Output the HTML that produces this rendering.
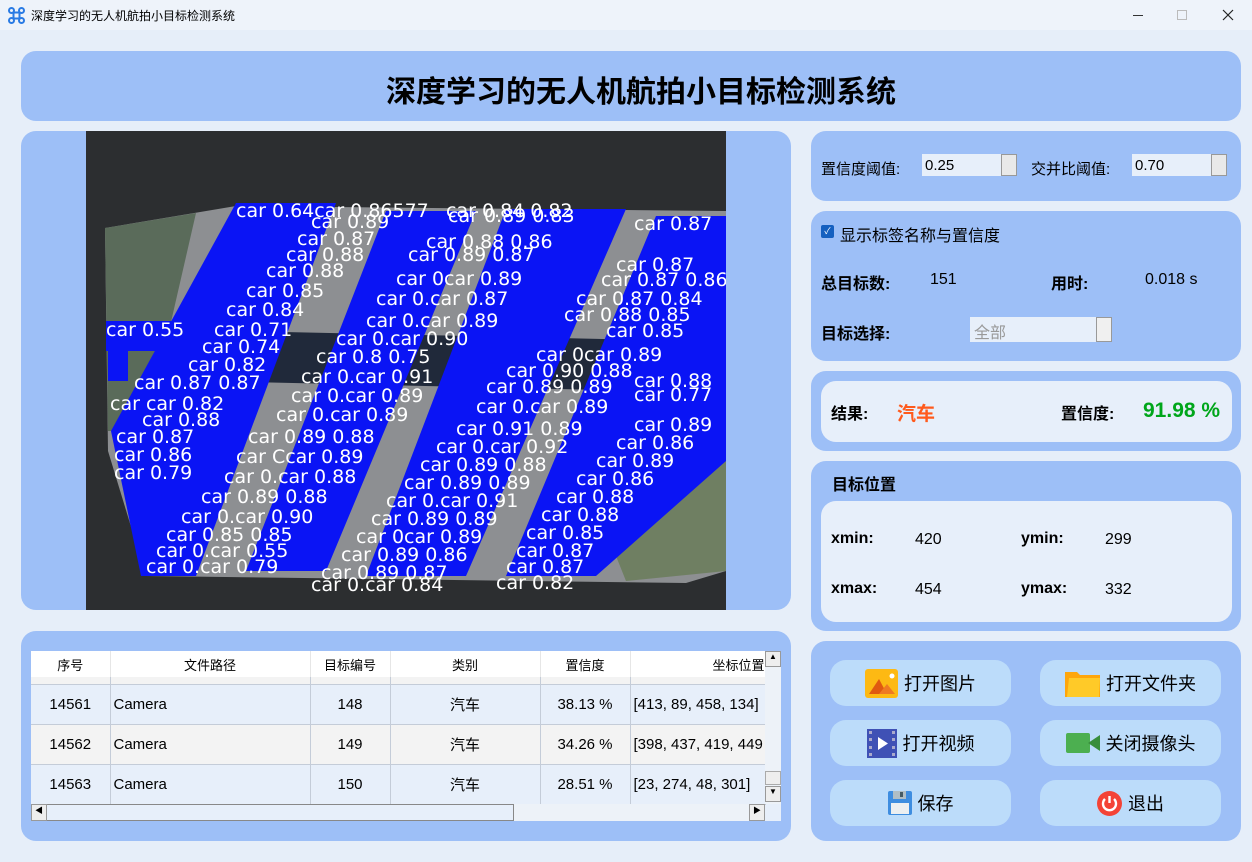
<!DOCTYPE html><html><head><meta charset="utf-8"><style>
*{margin:0;padding:0;box-sizing:border-box}
body{width:1252px;height:862px;background:#e6eef9;font-family:"Liberation Sans","Noto Sans CJK SC",sans-serif;position:relative;overflow:hidden;color:#000}
.a{position:absolute}
.p{position:absolute;background:#9dbff7;border-radius:15px}
.w{position:absolute;background:#e7effa;border-radius:15px}
.t{position:absolute;font-size:16px;white-space:nowrap}
.b{font-weight:bold}
.btn{position:absolute;width:181px;height:46px;background:#bcdcfa;border-radius:16px;font-size:18px;display:flex;align-items:center;justify-content:center;gap:6px}
table{border-collapse:collapse;font-size:15px}
td{border-right:1px solid #c4ccd8;border-bottom:1px solid #c4ccd8;height:40px;text-align:center;white-space:nowrap;overflow:hidden}
.spin{position:absolute;width:95px;height:22px;background:#e7effa;font-size:15px;padding:3px 0 0 3px}
.spin i{position:absolute;right:0;top:0;width:16px;height:22px;background:#e9e9e9;border:1px solid #999}
</style></head><body>
<div class="a" style="left:0;top:0;width:1252px;height:30px;background:#eef3fa"></div>
<svg class="a" style="left:8px;top:7px" width="17" height="17" viewBox="0 0 17 17"><g fill="none" stroke="#2a7be4" stroke-width="2"><circle cx="3.5" cy="3.5" r="2.5"/><circle cx="13.5" cy="3.5" r="2.5"/><circle cx="3.5" cy="13.5" r="2.5"/><circle cx="13.5" cy="13.5" r="2.5"/><rect x="5.5" y="5.5" width="6" height="6"/></g></svg>
<div class="t" style="left:31px;top:7px;font-size:12px">深度学习的无人机航拍小目标检测系统</div>
<div class="a" style="left:1133px;top:15px;width:10px;height:1px;background:#333"></div>
<div class="a" style="left:1177px;top:10px;width:10px;height:10px;border:1px solid #bbb"></div>
<svg class="a" style="left:1222px;top:9px" width="12" height="12"><path d="M1 1L11 11M11 1L1 11" stroke="#222" stroke-width="1.2"/></svg>

<div class="p" style="left:21px;top:51px;width:1220px;height:70px"></div>
<div class="t b" style="left:0;width:1282px;text-align:center;top:67px;font-size:30px">深度学习的无人机航拍小目标检测系统</div>

<div class="p" style="left:21px;top:131px;width:770px;height:479px"></div>
<svg class="a" style="left:86px;top:131px" width="640" height="479" viewBox="0 0 640 479">
<rect width="640" height="479" fill="#2c2e30"/>
<polygon points="19,97 150,75 640,80 640,440 600,452 60,445 22,320" fill="#8d8f92"/>
<polygon points="19,97 110,82 60,300 22,300" fill="#5a6b5a"/>
<polygon points="520,400 640,260 640,440 540,450" fill="#6f7f62"/>
<polygon points="150,200 610,210 560,260 120,250" fill="#20293a"/>
<g fill="#0a14f5">
<polygon points="150,72 250,72 110,445 55,445 25,300"/>
<polygon points="300,80 390,80 240,440 160,440"/>
<polygon points="420,78 540,78 380,445 280,445"/>
<polygon points="570,85 640,85 640,330 510,445 420,445"/>
<rect x="20" y="190" width="90" height="30"/>
<rect x="22" y="220" width="20" height="30"/>
</g>
<g fill="#fff" font-family="DejaVu Sans,sans-serif" font-size="19">
<text x="150" y="86">car 0.64car 0.86577</text><text x="360" y="86">car 0.84 0.82</text>
<text x="225" y="97">car 0.89</text><text x="362" y="91">car 0.89  0.83</text><text x="548" y="99">car 0.87</text>
<text x="211" y="114">car 0.87</text><text x="340" y="117">car 0.88  0.86</text>
<text x="200" y="130">car 0.88</text><text x="322" y="130">car 0.89 0.87</text><text x="530" y="140">car 0.87</text>
<text x="180" y="146">car 0.88</text><text x="310" y="154">car 0car 0.89</text><text x="515" y="155">car 0.87 0.86</text>
<text x="160" y="166">car 0.85</text><text x="290" y="174">car 0.car 0.87</text><text x="490" y="174">car 0.87 0.84</text>
<text x="140" y="185">car 0.84</text><text x="280" y="196">car 0.car 0.89</text><text x="478" y="190">car 0.88 0.85</text>
<text x="20" y="205">car 0.55</text><text x="128" y="205">car 0.71</text><text x="250" y="214">car 0.car 0.90</text><text x="520" y="206">car 0.85</text>
<text x="116" y="222">car 0.74</text><text x="230" y="232">car 0.8 0.75</text><text x="450" y="230">car 0car 0.89</text>
<text x="102" y="240">car 0.82</text><text x="215" y="252">car 0.car 0.91</text><text x="420" y="246">car 0.90 0.88</text>
<text x="48" y="258">car 0.87 0.87</text><text x="205" y="271">car 0.car 0.89</text><text x="400" y="262">car 0.89 0.89</text><text x="548" y="256">car 0.88</text>
<text x="24" y="279">car car 0.82</text><text x="190" y="290">car 0.car 0.89</text><text x="390" y="282">car 0.car 0.89</text><text x="548" y="270">car 0.77</text>
<text x="56" y="295">car 0.88</text><text x="162" y="312">car 0.89 0.88</text><text x="370" y="304">car 0.91 0.89</text>
<text x="30" y="312">car 0.87</text><text x="350" y="322">car 0.car 0.92</text><text x="548" y="300">car 0.89</text>
<text x="28" y="330">car 0.86</text><text x="150" y="332">car Ccar 0.89</text><text x="334" y="340">car 0.89 0.88</text><text x="530" y="318">car 0.86</text>
<text x="28" y="348">car 0.79</text><text x="138" y="352">car 0.car 0.88</text><text x="318" y="358">car 0.89 0.89</text><text x="510" y="336">car 0.89</text>
<text x="115" y="372">car 0.89 0.88</text><text x="300" y="376">car 0.car 0.91</text><text x="490" y="354">car 0.86</text>
<text x="95" y="392">car 0.car 0.90</text><text x="285" y="394">car 0.89 0.89</text><text x="470" y="372">car 0.88</text>
<text x="80" y="410">car 0.85 0.85</text><text x="270" y="412">car 0car 0.89</text><text x="455" y="390">car 0.88</text>
<text x="70" y="426">car 0.car 0.55</text><text x="255" y="430">car 0.89 0.86</text><text x="440" y="408">car 0.85</text>
<text x="60" y="442">car 0.car 0.79</text><text x="235" y="448">car 0.89 0.87</text><text x="430" y="426">car 0.87</text>
<text x="225" y="460">car 0.car 0.84</text><text x="420" y="442">car 0.87</text><text x="410" y="458">car 0.82</text>
</g>
</svg>

<div class="p" style="left:21px;top:631px;width:770px;height:210px"></div>
<div class="a" style="left:31px;top:651px;width:750px;height:170px;background:#e7effa;overflow:hidden">
<table style="width:734px;table-layout:fixed">
<colgroup><col style="width:79px"><col style="width:200px"><col style="width:80px"><col style="width:150px"><col style="width:90px"><col style="width:135px"></colgroup>
<tr style="background:#fff;font-size:13px"><td style="height:26px;border-bottom:0;border-right:1px solid #e6e6e6">序号</td><td style="height:26px;border-bottom:0;border-right:1px solid #e6e6e6">文件路径</td><td style="height:26px;border-bottom:0;border-right:1px solid #e6e6e6">目标编号</td><td style="height:26px;border-bottom:0;border-right:1px solid #e6e6e6">类别</td><td style="height:26px;border-bottom:0;border-right:1px solid #e6e6e6">置信度</td><td style="height:26px;border-bottom:0;text-align:right">坐标位置</td></tr>
<tr style="background:#f3f3f3"><td style="height:7px"></td><td style="height:7px"></td><td style="height:7px"></td><td style="height:7px"></td><td style="height:7px"></td><td style="height:7px"></td></tr>
<tr style="background:#e7effa"><td>14561</td><td style="text-align:left;padding-left:3px">Camera</td><td>148</td><td>汽车</td><td>38.13 %</td><td style="text-align:left;padding-left:3px">[413, 89, 458, 134]</td></tr>
<tr style="background:#f3f3f3"><td>14562</td><td style="text-align:left;padding-left:3px">Camera</td><td>149</td><td>汽车</td><td>34.26 %</td><td style="text-align:left;padding-left:3px">[398, 437, 419, 449</td></tr>
<tr style="background:#e7effa"><td>14563</td><td style="text-align:left;padding-left:3px">Camera</td><td>150</td><td>汽车</td><td>28.51 %</td><td style="text-align:left;padding-left:3px">[23, 274, 48, 301]</td></tr>
</table>
<div class="a" style="left:734px;top:0;width:16px;height:153px;background:#edf2f8"></div>
<div class="a" style="left:734px;top:0;width:16px;height:16px;background:#eee;border:1px solid #999;font-size:8px;text-align:center">▲</div>
<div class="a" style="left:734px;top:120px;width:16px;height:14px;background:#eee;border:1px solid #aaa"></div>
<div class="a" style="left:734px;top:135px;width:16px;height:16px;background:#eee;border:1px solid #999;font-size:8px;text-align:center">▼</div>
<div class="a" style="left:0;top:153px;width:734px;height:17px;background:#edf2f8"></div>
<div class="a" style="left:0;top:153px;width:483px;height:17px;background:#e7effa;border:1px solid #888"></div>
<div class="a" style="left:718px;top:153px;width:16px;height:17px;background:#eee;border:1px solid #999;font-size:8px;text-align:center">▶</div>
<div class="a" style="left:0;top:153px;width:16px;height:17px;background:#eee;border:1px solid #999;font-size:8px;text-align:center">◀</div>
</div>

<div class="p" style="left:811px;top:131px;width:430px;height:70px"></div>
<div class="t" style="left:821px;top:158px;font-size:15px">置信度阈值:</div>
<div class="spin" style="left:922px;top:154px">0.25<i></i></div>
<div class="t" style="left:1031px;top:158px;font-size:15px">交并比阈值:</div>
<div class="spin" style="left:1132px;top:154px">0.70<i></i></div>

<div class="p" style="left:811px;top:211px;width:430px;height:150px"></div>
<div class="a" style="left:821px;top:225px;width:13px;height:13px;background:#1560c0;border-radius:2px;color:#fff;font-size:9px;text-align:center;line-height:13px">✓</div>
<div class="t" style="left:840px;top:222px;font-size:16px">显示标签名称与置信度</div>
<div class="t b" style="left:821px;top:270px">总目标数:</div>
<div class="t" style="left:930px;top:271px">151</div>
<div class="t b" style="left:1051px;top:270px">用时:</div>
<div class="t" style="left:1145px;top:271px">0.018 s</div>
<div class="t b" style="left:821px;top:320px">目标选择:</div>
<div class="a" style="left:970px;top:317px;width:142px;height:25px;background:#e7effa;color:#999;font-size:16px;padding:2px 4px">全部<i class="a" style="right:0;top:0;width:16px;height:25px;background:#f0f0f0;border:1px solid #999"></i></div>

<div class="p" style="left:811px;top:371px;width:430px;height:80px"></div>
<div class="w" style="left:821px;top:381px;width:411px;height:61px"></div>
<div class="t b" style="left:831px;top:400px">结果:</div>
<div class="t b" style="left:897px;top:399px;font-size:19px;color:#ff5a1c">汽车</div>
<div class="t b" style="left:1061px;top:400px">置信度:</div>
<div class="t b" style="left:1143px;top:399px;font-size:21px;color:#00a61a">91.98 %</div>

<div class="p" style="left:811px;top:461px;width:430px;height:170px"></div>
<div class="t b" style="left:832px;top:471px">目标位置</div>
<div class="w" style="left:821px;top:501px;width:411px;height:121px"></div>
<div class="t b" style="left:831px;top:530px">xmin:</div><div class="t" style="left:915px;top:531px">420</div>
<div class="t b" style="left:1021px;top:530px">ymin:</div><div class="t" style="left:1105px;top:531px">299</div>
<div class="t b" style="left:831px;top:580px">xmax:</div><div class="t" style="left:915px;top:581px">454</div>
<div class="t b" style="left:1021px;top:580px">ymax:</div><div class="t" style="left:1105px;top:581px">332</div>

<div class="p" style="left:811px;top:641px;width:430px;height:200px"></div>
<div class="btn" style="left:830px;top:660px"><svg width="33" height="29"><rect width="33" height="29" rx="3" fill="#fdb913"/><polygon points="4,25 14,10 22,25" fill="#e05a10"/><polygon points="14,25 22,15 30,25" fill="#ef7a22"/><circle cx="27" cy="7" r="2.5" fill="#fff"/></svg>打开图片</div>
<div class="btn" style="left:1040px;top:660px"><svg width="35" height="28"><path d="M0 3h12l3 3h20v22H0z" fill="#fea60c"/><path d="M4 9h31l-1 19H2z" fill="#ffca28"/></svg>打开文件夹</div>
<div class="btn" style="left:830px;top:720px"><svg width="30" height="29"><rect width="30" height="29" fill="#3f51b5"/><g fill="#aac"><rect x="2" y="2" width="3" height="3"/><rect x="2" y="9" width="3" height="3"/><rect x="2" y="17" width="3" height="3"/><rect x="2" y="24" width="3" height="3"/><rect x="25" y="2" width="3" height="3"/><rect x="25" y="9" width="3" height="3"/><rect x="25" y="17" width="3" height="3"/><rect x="25" y="24" width="3" height="3"/></g><polygon points="11,8 21,14.5 11,21" fill="#fff"/></svg>打开视频</div>
<div class="btn" style="left:1040px;top:720px"><svg width="34" height="20"><rect width="24" height="20" rx="2" fill="#4caf50"/><polygon points="22,10 34,2 34,18" fill="#388e3c"/></svg>关闭摄像头</div>
<div class="btn" style="left:830px;top:780px"><svg width="24" height="24"><rect width="24" height="24" rx="2" fill="#3e8de0"/><rect x="5" y="0" width="13" height="8" fill="#b0bec5"/><rect x="12" y="1" width="3" height="5" fill="#455a64"/><rect x="3" y="12" width="18" height="11" fill="#eceff1"/></svg>保存</div>
<div class="btn" style="left:1040px;top:780px"><svg width="25" height="25"><circle cx="12.5" cy="12.5" r="12.5" fill="#f44336"/><path d="M8 8a6.5 6.5 0 1 0 9 0" fill="none" stroke="#fff" stroke-width="2.4"/><line x1="12.5" y1="5" x2="12.5" y2="12" stroke="#fff" stroke-width="2.4"/></svg>退出</div>
</body></html>
